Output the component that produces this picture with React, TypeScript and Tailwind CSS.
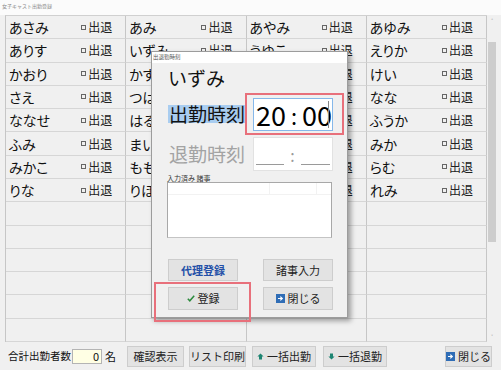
import type { ReactNode } from "react";

const columns: string[][] = [
  ["あさみ", "ありす", "かおり", "さえ", "ななせ", "ふみ", "みかこ", "りな"],
  ["あみ", "いずみ", "かすみ", "つばさ", "はるか", "まい", "もも", "りほ"],
  ["あやみ", "うゆこ", "きょう", "ちか", "のあ", "ひな", "ゆい", "るい"],
  ["あゆみ", "えりか", "けい", "なな", "ふうか", "みか", "らむ", "れみ"]
];

const ROWS = 14;

function CloseIcon() {
  return (
    <svg width="9" height="9" viewBox="0 0 9 9" className="shrink-0">
      <rect width="9" height="9" fill="#2f6db6" />
      <path d="M2 4.5h4M4.3 2.6l2 1.9-2 1.9" stroke="#fff" strokeWidth="1.2" fill="none" />
    </svg>
  );
}

function ArrowIcon({ down = false }: { down?: boolean }) {
  return (
    <svg width="7" height="7" viewBox="0 0 7 7" className="shrink-0">
      <path
        d={down ? "M2 0.5h3v3h1.6L3.5 6.6 0.4 3.5H2z" : "M3.5 0.4l3.1 3.1H5v3H2v-3H0.4z"}
        fill="#1e8572"
      />
    </svg>
  );
}

function Button({ children, className = "" }: { children: ReactNode; className?: string }) {
  return (
    <div
      className={`flex items-center justify-center gap-[3px] border border-[#cdcdcd] bg-[#e3e3e3] text-[11px] leading-none text-[#222] ${className}`}
    >
      {children}
    </div>
  );
}

function Cell({ name }: { name?: string }) {
  return (
    <div className="flex items-center justify-between border-b border-r border-b-[#d6d6d6] border-r-[#c6c6c6] pl-[3px] pr-[13px]">
      {name ? (
        <>
          <span className="text-[14px] leading-none text-[#111] [font-feature-settings:'palt']">{name}</span>
          <span className="flex items-center text-[12px] leading-none text-[#222]">
            <span className="mr-[2px] inline-block h-[5px] w-[5px] border border-[#666]" />
            出退
          </span>
        </>
      ) : null}
    </div>
  );
}

export default function App() {
  const cells: (string | undefined)[] = [];
  for (let r = 0; r < ROWS; r++) {
    for (let c = 0; c < 4; c++) {
      cells.push(columns[c][r]);
    }
  }

  return (
    <div className="relative h-[370px] w-[501px] overflow-hidden bg-[#f0f0f0] font-['Noto_Sans_CJK_JP','Noto_Sans',sans-serif] text-[#111]">
      <div className="h-[15px] bg-[#fbfbfb] pl-[2px] pt-[3px] text-[5px] leading-[6px] text-[#8a8a8a]">
        女子キャスト出勤登録
      </div>

      <div className="ml-[5px] flex h-[327px]">
        <div className="grid h-[327px] w-[482px] grid-cols-4 grid-rows-[repeat(14,minmax(0,1fr))] border-l border-t border-l-[#c6c6c6] border-t-[#d0d0d0]">
          {cells.map((name, i) => (
            <Cell key={i} name={name} />
          ))}
        </div>
        <div className="flex w-[10px] flex-col items-center">
          <span className="mt-[3px] text-[6px] leading-[6px] text-[#777]">˄</span>
          <div className="ml-[-1px] mt-[18px] h-[200px] w-[8px] bg-[#cdcdcd]" />
          <span className="mt-auto mb-[2px] text-[6px] leading-[6px] text-[#777]">˅</span>
        </div>
      </div>

      <div className="flex h-[28px] items-center pl-[8px] text-[10.5px] text-[#111]">
        <span className="leading-none">合計出勤者数</span>
        <div className="ml-[1px] flex h-[15px] w-[30px] items-center justify-end border border-[#b4b4b4] bg-[#ffffe4] pr-[2px] text-[11px] leading-none">
          0
        </div>
        <span className="ml-[3px] text-[11px] leading-none">名</span>
        <Button className="ml-[11px] h-[21px] w-[57px]">確認表示</Button>
        <Button className="ml-[5px] h-[21px] w-[57px]">リスト印刷</Button>
        <Button className="ml-[6px] h-[21px] w-[64px]">
          <ArrowIcon />
          一括出勤
        </Button>
        <Button className="ml-[7px] h-[21px] w-[64px]">
          <ArrowIcon down />
          一括退勤
        </Button>
        <Button className="ml-auto mr-[9px] h-[21px] w-[47px]">
          <CloseIcon />
          閉じる
        </Button>
      </div>

      <div className="absolute left-[151px] top-[51px] h-[267px] w-[197px] border border-[#9c9c9c] bg-[#f0f0f0] shadow-[3px_3px_5px_rgba(0,0,0,0.35)]">
        <div className="h-[11px] bg-white pl-[1px] text-[5.5px] leading-[11px] text-[#555]">出退勤時刻</div>
        <div className="pl-[16px]">
          <div className="mt-[4px] text-[19px] leading-[22px] text-[#111]">いずみ</div>

          <div className="mt-[4px] flex h-[42px] items-center">
            <span className="w-[77px] bg-[#a9cdf0] pl-[1px] text-[19px] leading-[18px] text-[#111]">出勤時刻</span>
            <div className="h-[42px] w-[99px] border-2 border-[#e8707b] pl-[6px] pt-[3px]">
              <div className="relative flex h-[33px] w-[80px] items-center border border-[#86b8ea] bg-white pl-[2px] text-[27px] leading-none text-black">
                <span>20</span>
                <span className="mx-[5px] text-[22px]">:</span>
                <span>00</span>
                <span className="absolute right-[3px] top-[2px] h-[27px] w-px bg-[#888]" />
              </div>
            </div>
          </div>

          <div className="mt-[2px] flex h-[34px] items-center">
            <span className="w-[77px] pl-[1px] text-[19px] leading-[18px] text-[#a3a3a3]">退勤時刻</span>
            <div className="ml-[8px] flex h-[34px] w-[80px] items-end justify-between border border-[#e2e2e2] bg-white px-[2px] pb-[5px]">
              <span className="h-px w-[28px] bg-[#9a9a9a]" />
              <span className="mb-[2px] text-[16px] leading-none text-[#9a9a9a]">:</span>
              <span className="h-px w-[29px] bg-[#9a9a9a]" />
            </div>
          </div>

          <div className="ml-[-1px] mt-[3px] text-[7px] leading-[8px] text-[#333]">入力済み 諸事</div>
          <div className="ml-[-1px] h-[56px] w-[165px] border border-[#a8a8a8] border-b-[#c4c4c4] bg-white">
            <div className="flex h-[12px] border-b border-[#f2f2f2]">
              <div className="w-[102px] border-r border-[#f2f2f2]" />
              <div className="w-[47px] border-r border-[#f2f2f2]" />
            </div>
          </div>

          <div className="mt-[21px] flex gap-[25px]">
            <Button className="h-[22px] w-[70px] font-bold text-[#2350a8]">代理登録</Button>
            <Button className="h-[22px] w-[70px]">諸事入力</Button>
          </div>
          <div className="mt-[6px] flex gap-[25px]">
            <Button className="h-[23px] w-[70px]">
              <svg width="8" height="7" viewBox="0 0 8 7" className="shrink-0">
                <path d="M0.8 3.8l2 2 4.4-5" stroke="#2c8a3c" strokeWidth="1.5" fill="none" />
              </svg>
              登録
            </Button>
            <Button className="h-[23px] w-[70px]">
              <CloseIcon />
              閉じる
            </Button>
          </div>
        </div>
        <div className="absolute left-[2px] top-[230px] h-[40px] w-[97px] border-2 border-[#e8707b]" />
      </div>
    </div>
  );
}
